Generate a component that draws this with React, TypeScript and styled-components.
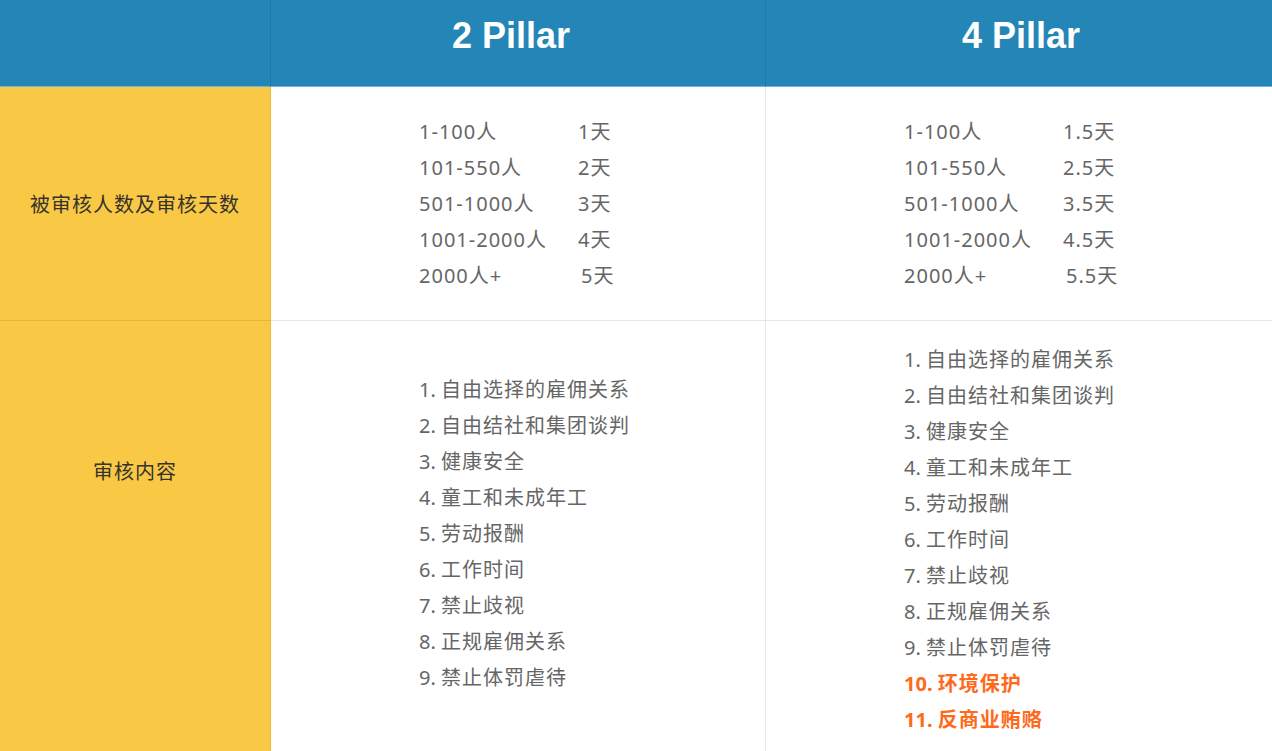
import React from "react";
import styled, { createGlobalStyle } from "styled-components";

const Global = createGlobalStyle`
  html, body { margin: 0; padding: 0; background: #ffffff; }
  body { font-family: "Noto Sans", "Noto Sans CJK SC", sans-serif; overflow: hidden; }
`;

const Table = styled.div`
  display: grid;
  grid-template-columns: 271px 495px 506px;
  width: 1272px;
`;

const HeaderCell = styled.div<{ $last?: boolean; $shift?: number }>`
  height: 87px;
  background: #2386b6;
  border-bottom: 1px solid #6fb6dc;
  border-right: ${(p) => (p.$last ? "none" : "1px solid #1f7aa7")};
  display: flex;
  align-items: center;
  justify-content: center;
  color: #ffffff;
  font-family: "Liberation Sans", Arial, sans-serif;
  font-weight: 700;
  font-size: 36px;
  box-sizing: border-box;
  padding-bottom: 14px;
  padding-right: ${(p) => p.$shift ?? 0}px;
  padding-left: ${(p) => (p.$last ? 4 : 0)}px;
`;

const LabelCell = styled.div<{ $height: number; $top?: number }>`
  background: #f9c946;
  border-right: 1px solid #e9b937;
  border-bottom: 1px solid #e2b43c;
  box-sizing: border-box;
  height: ${(p) => p.$height}px;
  display: flex;
  justify-content: center;
  align-items: ${(p) => (p.$top !== undefined ? "flex-start" : "center")};
  padding-top: ${(p) => p.$top ?? 0}px;
  color: #36332c;
  font-family: "Noto Sans CJK SC", sans-serif;
  font-size: 20px;
  letter-spacing: 1px;
  line-height: 36px;
`;

const ContentCell = styled.div<{ $height: number; $top?: number; $left: number; $last?: boolean }>`
  height: ${(p) => p.$height}px;
  box-sizing: border-box;
  border-right: ${(p) => (p.$last ? "none" : "1px solid #e6e9ec")};
  border-bottom: 1px solid #e1e7ee;
  display: flex;
  align-items: ${(p) => (p.$top !== undefined ? "flex-start" : "center")};
  padding-top: ${(p) => p.$top ?? 0}px;
  padding-left: ${(p) => p.$left}px;
`;

const Schedule = styled.div`
  display: grid;
  grid-template-columns: 159px auto;
  color: #666666;
  font-size: 20px;
  letter-spacing: 1px;
  line-height: 36px;
`;

const Days = styled.span<{ $shift?: number }>`
  padding-left: ${(p) => p.$shift ?? 0}px;
`;

const List = styled.ol`
  list-style: none;
  margin: 0;
  padding: 0;
  color: #666666;
  font-size: 20px;
  letter-spacing: 1px;
  line-height: 36px;
`;

const Item = styled.li<{ $hot?: boolean }>`
  color: ${(p) => (p.$hot ? "#ff6a1a" : "#666666")};
  font-weight: ${(p) => (p.$hot ? 700 : 400)};
`;

const Num = styled.span`
  letter-spacing: 0;
`;

const schedule2 = [
  ["1-100人", "1天"],
  ["101-550人", "2天"],
  ["501-1000人", "3天"],
  ["1001-2000人", "4天"],
  ["2000人+", "5天"],
];
const schedule4 = [
  ["1-100人", "1.5天"],
  ["101-550人", "2.5天"],
  ["501-1000人", "3.5天"],
  ["1001-2000人", "4.5天"],
  ["2000人+", "5.5天"],
];

const items = [
  "自由选择的雇佣关系",
  "自由结社和集团谈判",
  "健康安全",
  "童工和未成年工",
  "劳动报酬",
  "工作时间",
  "禁止歧视",
  "正规雇佣关系",
  "禁止体罚虐待",
];
const extra = ["环境保护", "反商业贿赂"];

const renderSchedule = (rows: string[][]) => (
  <Schedule>
    {rows.map(([a, b], i) => (
      <React.Fragment key={i}>
        <span>{a}</span>
        <Days $shift={i === rows.length - 1 ? 3 : 0}>{b}</Days>
      </React.Fragment>
    ))}
  </Schedule>
);

export default function App() {
  return (
    <>
      <Global />
      <Table>
        <HeaderCell />
        <HeaderCell $shift={14}>2 Pillar</HeaderCell>
        <HeaderCell $last>4 Pillar</HeaderCell>

        <LabelCell $height={234}>被审核人数及审核天数</LabelCell>
        <ContentCell $height={234} $left={148}>
          {renderSchedule(schedule2)}
        </ContentCell>
        <ContentCell $height={234} $left={138} $last>
          {renderSchedule(schedule4)}
        </ContentCell>

        <LabelCell $height={440} $top={132}>审核内容</LabelCell>
        <ContentCell $height={440} $top={51} $left={148}>
          <List>
            {items.map((t, i) => (
              <Item key={i}>
                <Num>{`${i + 1}. `}</Num>
                {t}
              </Item>
            ))}
          </List>
        </ContentCell>
        <ContentCell $height={440} $top={21} $left={138} $last>
          <List>
            {items.map((t, i) => (
              <Item key={i}>
                <Num>{`${i + 1}. `}</Num>
                {t}
              </Item>
            ))}
            {extra.map((t, i) => (
              <Item key={`x${i}`} $hot>
                <Num>{`${items.length + i + 1}. `}</Num>
                {t}
              </Item>
            ))}
          </List>
        </ContentCell>
      </Table>
    </>
  );
}
